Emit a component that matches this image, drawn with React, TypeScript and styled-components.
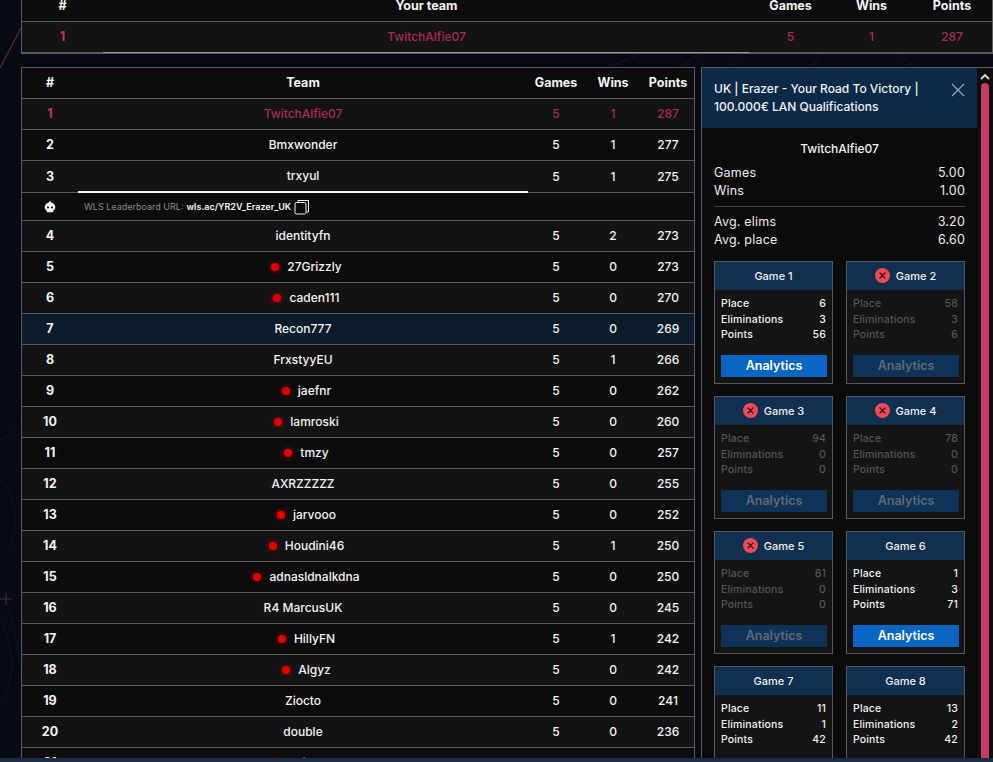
import React from 'react';
import styled, { createGlobalStyle, css } from 'styled-components';

const GlobalStyle = createGlobalStyle`
  html, body {
    margin: 0;
    padding: 0;
    background: #050a13;
    color: #fff;
    font-family: Inter, 'Open Sans', sans-serif;
  }
  * { box-sizing: border-box; }
`;

const Page = styled.div`
  position: relative;
  width: 993px;
  height: 762px;
  display: flex;
  flex-direction: column;
  overflow: hidden;
`;
const Backdrop = styled.svg`
  position: absolute;
  inset: 0;
  width: 993px;
  height: 762px;
`;
const Content = styled.div`
  position: relative;
  flex: 1;
  min-height: 0;
  overflow: hidden;
  padding-left: 21px;
`;
const BottomBar = styled.div`
  position: relative;
  height: 4px;
  background: #1b2d44;
`;

const TopTable = styled.div`
  margin-top: -9px;
  border: 1px solid #5b5b5b;
  border-top: 0;
  background: #0c0c0c;
  height: 63px;
`;
const Columns = styled.div`
  display: flex;
  gap: 6px;
  margin-top: 13px;
  height: 691px;
`;
const MainTable = styled.div`
  width: 674px;
  height: 691px;
  overflow: hidden;
  border: 1px solid #5b5b5b;
  border-bottom: 0;
  background: #0c0c0c;
`;

const topGrid = css`grid-template-columns: 81px 647px 81px 81px 1fr;`;
const mainGrid = css`grid-template-columns: 56px 450px 56px 58px 1fr;`;

const Row = styled.div<{ $wide?: boolean; $tone?: 'dark' | 'light' | 'blue'; $tall?: boolean }>`
  display: grid;
  ${p => (p.$wide ? topGrid : mainGrid)}
  height: ${p => (p.$tall ? 32 : 31)}px;
  background: ${p =>
    p.$tone === 'light' ? '#131313' : p.$tone === 'blue' ? '#0b1c2c' : '#0c0c0c'};
`;
const Cell = styled.div<{ $head?: boolean; $num?: boolean; $hot?: boolean; $focus?: 'thin' | 'thick' }>`
  display: flex;
  align-items: center;
  justify-content: center;
  gap: 8px;
  padding-bottom: 1px;
  border-bottom: 1px solid #5b5b5b;
  font-size: ${p => (p.$head || p.$num ? 12.5 : 12)}px;
  font-weight: ${p => (p.$head || p.$num ? 700 : 500)};
  color: ${p => (p.$hot ? (p.$num ? '#c5325f' : '#a82c56') : '#f4f4f4')};
  ${p => p.$focus === 'thin' && 'border-bottom: 1px solid #9a9a9a;'}
  ${p => p.$focus === 'thick' && 'border-bottom: 2px solid #f2f2f2;'}
`;
const Dot = styled.span`
  width: 8px;
  height: 8px;
  margin-left: 7px;
  border-radius: 50%;
  background: #e40000;
  box-shadow: 0 0 4px 1px rgba(200, 0, 0, 0.55);
`;

const LinkRow = styled.div`
  display: grid;
  grid-template-columns: 56px 1fr;
  height: 28px;
  border-bottom: 1px solid #5b5b5b;
  background: #0c0c0c;
`;
const SkullCell = styled.div`
  display: flex;
  align-items: center;
  justify-content: center;
`;
const LinkCell = styled.div`
  display: flex;
  align-items: center;
  padding-left: 6px;
  font-size: 9px;
  color: #8b8b8b;
`;
const LinkText = styled.span`
  margin-left: 3px;
  font-weight: 600;
  color: #f2f2f2;
`;
const CopyIcon = styled.svg`
  margin-left: 3px;
  width: 16px;
  height: 16px;
`;

const Panel = styled.div`
  flex: 1;
  min-width: 0;
  display: flex;
  height: 691px;
  border: 1px solid #5b5b5b;
  border-width: 1px 0 0 1px;
  background: #0b0b0b;
`;
const PanelMain = styled.div`
  width: 275px;
  overflow: hidden;
`;
const PanelHead = styled.div`
  display: flex;
  justify-content: space-between;
  height: 60px;
  padding: 12px 12px 0;
  background: #0c2a47;
  font-size: 12px;
  font-weight: 500;
  line-height: 18px;
  color: #f2f2f2;
`;
const HeadTitle = styled.div`
  width: 216px;
`;
const CloseIcon = styled.svg`
  margin-top: 3px;
  width: 14px;
  height: 14px;
`;
const PanelBody = styled.div`
  padding: 12px 12px 0;
`;
const PlayerName = styled.div`
  height: 18px;
  line-height: 18px;
  margin-bottom: 6px;
  text-align: center;
  font-size: 12px;
  font-weight: 500;
  color: #f2f2f2;
`;
const StatLine = styled.div`
  display: flex;
  justify-content: space-between;
  height: 18px;
  line-height: 18px;
  font-size: 12.5px;
  letter-spacing: 0.2px;
  color: #ececec;
`;
const Divider = styled.div`
  height: 1px;
  margin: 6px 0 6px;
  background: #3f3f3f;
`;
const CardGrid = styled.div`
  display: grid;
  grid-template-columns: 119px 119px;
  gap: 12px 13px;
  margin-top: 12px;
`;
const Card = styled.div`
  height: 123px;
  border: 1px solid #535a62;
  background: #141414;
`;
const CardHead = styled.div`
  display: flex;
  align-items: center;
  justify-content: center;
  gap: 6px;
  height: 28px;
  padding-bottom: 1px;
  background: #112f4e;
  font-size: 11px;
  font-weight: 500;
  color: #f0f0f0;
`;
const FailIcon = styled.svg`
  width: 15px;
  height: 15px;
`;
const CardBody = styled.div<{ $off?: boolean }>`
  padding: 6px 6px 0;
  color: ${p => (p.$off ? '#565656' : '#f2f2f2')};
`;
const CardLine = styled.div`
  display: flex;
  justify-content: space-between;
  height: 15.5px;
  line-height: 15.5px;
  font-size: 10.5px;
  font-weight: 500;
  letter-spacing: 0.15px;
`;
const AnalyticsButton = styled.button<{ $off?: boolean }>`
  display: block;
  width: 106px;
  height: 22px;
  margin-top: 12.5px;
  padding: 0 0 1px;
  border: 0;
  background: ${p => (p.$off ? '#0f3358' : '#0a66c2')};
  color: ${p => (p.$off ? '#5f6a75' : '#fff')};
  font-family: inherit;
  font-size: 12.5px;
  font-weight: 600;
`;

const ScrollRail = styled.div`
  width: 16px;
  height: 100%;
  display: flex;
  flex-direction: column;
  align-items: center;
  background: #0e0e0e;
`;
const ScrollUp = styled.svg`
  margin-top: 5px;
  width: 10px;
  height: 7px;
`;
const ScrollThumb = styled.div`
  margin-top: 3px;
  width: 8px;
  flex: 1;
  border-radius: 4px 4px 0 0;
  background: #c83a68;
`;

const TEAMS: [string, number, number, boolean?][] = [
  ['Bmxwonder', 1, 277],
  ['trxyul', 1, 275],
  ['identityfn', 2, 273],
  ['27Grizzly', 0, 273, true],
  ['caden111', 0, 270, true],
  ['Recon777', 0, 269],
  ['FrxstyyEU', 1, 266],
  ['jaefnr', 0, 262, true],
  ['lamroski', 0, 260, true],
  ['tmzy', 0, 257, true],
  ['AXRZZZZZ', 0, 255],
  ['jarvooo', 0, 252, true],
  ['Houdini46', 1, 250, true],
  ['adnasldnalkdna', 0, 250, true],
  ['R4 MarcusUK', 0, 245],
  ['HillyFN', 1, 242, true],
  ['Algyz', 0, 242, true],
  ['Ziocto', 0, 241],
  ['double', 0, 236],
  ['Sailors57', 0, 232, true],
];

const GAMES: [number, number, number, boolean][] = [
  [6, 3, 56, false],
  [58, 3, 6, true],
  [94, 0, 0, true],
  [78, 0, 0, true],
  [81, 0, 0, true],
  [1, 3, 71, false],
  [11, 1, 42, false],
  [13, 2, 42, false],
];

const toneFor = (rank: number): 'dark' | 'light' | 'blue' => {
  if (rank === 7) return 'blue';
  if (rank === 1 || rank === 3) return 'light';
  if (rank === 2) return 'dark';
  return rank % 2 === 0 ? 'light' : 'dark';
};

const Skull = () => (
  <svg width="12" height="13" viewBox="0 0 12 13">
    <path
      fill="#f4f4f4"
      d="M6 0.5 7 2.4c2.4.3 4.3 2.2 4.3 4.6 0 1.6-.8 2.9-2 3.6l-.3 1.6H3l-.3-1.6c-1.2-.7-2-2-2-3.6C.7 4.6 2.6 2.7 5 2.4Z"
    />
    <circle cx="4" cy="7.6" r="1" fill="#0c0c0c" />
    <circle cx="8" cy="7.6" r="1" fill="#0c0c0c" />
  </svg>
);

const FailBadge = () => (
  <FailIcon viewBox="0 0 15 15">
    <circle cx="7.5" cy="7.5" r="7.5" fill="#ef4a5b" />
    <path d="M5 5l5 5M10 5l-5 5" stroke="#3a1218" strokeWidth="1.4" strokeLinecap="round" />
  </FailIcon>
);

const GameCard = ({ index, game }: { index: number; game: [number, number, number, boolean] }) => {
  const [place, elims, points, off] = game;
  return (
    <Card>
      <CardHead>
        {off && <FailBadge />}
        Game {index}
      </CardHead>
      <CardBody $off={off}>
        <CardLine><span>Place</span><span>{place}</span></CardLine>
        <CardLine><span>Eliminations</span><span>{elims}</span></CardLine>
        <CardLine><span>Points</span><span>{points}</span></CardLine>
        <AnalyticsButton $off={off}>Analytics</AnalyticsButton>
      </CardBody>
    </Card>
  );
};

export default function App() {
  return (
    <Page>
      <GlobalStyle />
      <Backdrop viewBox="0 0 993 762" fill="none">
        <path d="M0 68 21 28" stroke="#54243f" strokeWidth="1.5" />
        <path d="M6 593v12M0 599h12" stroke="#5c2238" strokeWidth="1.2" />
        <path d="M0 440c14-6 18-12 21-22M0 480c16 12 20 40 10 70M0 620c12 20 16 50 4 80 M8 610c10 30 12 50 13 70" stroke="#0d1520" />
        <path d="M700 54l-20 13M740 54l-12 13M820 54l-8 13M900 54l14 13M640 54l-30 13" stroke="#0e1a2b" />
      </Backdrop>
      <Content>
        <TopTable>
          <Row $wide>
            <Cell $head>#</Cell>
            <Cell $head>Your team</Cell>
            <Cell $head>Games</Cell>
            <Cell $head>Wins</Cell>
            <Cell $head>Points</Cell>
          </Row>
          <Row $wide $tone="light">
            <Cell $num $hot>1</Cell>
            <Cell $hot $focus="thin">TwitchAlfie07</Cell>
            <Cell $hot>5</Cell>
            <Cell $hot>1</Cell>
            <Cell $hot>287</Cell>
          </Row>
        </TopTable>
        <Columns>
          <MainTable>
            <Row>
              <Cell $head>#</Cell>
              <Cell $head>Team</Cell>
              <Cell $head>Games</Cell>
              <Cell $head>Wins</Cell>
              <Cell $head>Points</Cell>
            </Row>
            <Row $tone="light">
              <Cell $num $hot>1</Cell>
              <Cell $hot>TwitchAlfie07</Cell>
              <Cell $hot>5</Cell>
              <Cell $hot>1</Cell>
              <Cell $hot>287</Cell>
            </Row>
            {TEAMS.map(([name, wins, points, live], i) => {
              const rank = i + 2;
              return (
                <React.Fragment key={name}>
                  <Row $tone={toneFor(rank)} $tall={rank === 3}>
                    <Cell $num>{rank}</Cell>
                    <Cell $focus={rank === 3 ? 'thick' : undefined}>
                      {live && <Dot />}
                      {name}
                    </Cell>
                    <Cell>5</Cell>
                    <Cell>{wins}</Cell>
                    <Cell>{points}</Cell>
                  </Row>
                  {rank === 3 && (
                    <LinkRow>
                      <SkullCell><Skull /></SkullCell>
                      <LinkCell>
                        WLS Leaderboard URL:
                        <LinkText>wls.ac/YR2V_Erazer_UK</LinkText>
                        <CopyIcon viewBox="0 0 16 16" fill="none" stroke="#f2f2f2">
                          <rect x="1" y="3.5" width="11" height="11.5" rx="1.5" />
                          <path d="M4 3.5V1.5h10.5v11.5H12" />
                        </CopyIcon>
                      </LinkCell>
                    </LinkRow>
                  )}
                </React.Fragment>
              );
            })}
          </MainTable>
          <Panel>
            <PanelMain>
              <PanelHead>
                <HeadTitle>UK | Erazer - Your Road To Victory | 100.000€ LAN Qualifications</HeadTitle>
                <CloseIcon viewBox="0 0 14 14">
                  <path d="M1 1l12 12M13 1 1 13" stroke="#8fa3b5" strokeWidth="1.3" />
                </CloseIcon>
              </PanelHead>
              <PanelBody>
                <PlayerName>TwitchAlfie07</PlayerName>
                <StatLine><span>Games</span><span>5.00</span></StatLine>
                <StatLine><span>Wins</span><span>1.00</span></StatLine>
                <Divider />
                <StatLine><span>Avg. elims</span><span>3.20</span></StatLine>
                <StatLine><span>Avg. place</span><span>6.60</span></StatLine>
                <CardGrid>
                  {GAMES.map((game, i) => (
                    <GameCard key={i} index={i + 1} game={game} />
                  ))}
                </CardGrid>
              </PanelBody>
            </PanelMain>
            <ScrollRail>
              <ScrollUp viewBox="0 0 10 7" fill="none">
                <path d="M1 6 5 2l4 4" stroke="#d8d8d8" strokeWidth="1.8" />
              </ScrollUp>
              <ScrollThumb />
            </ScrollRail>
          </Panel>
        </Columns>
      </Content>
      <BottomBar />
    </Page>
  );
}
